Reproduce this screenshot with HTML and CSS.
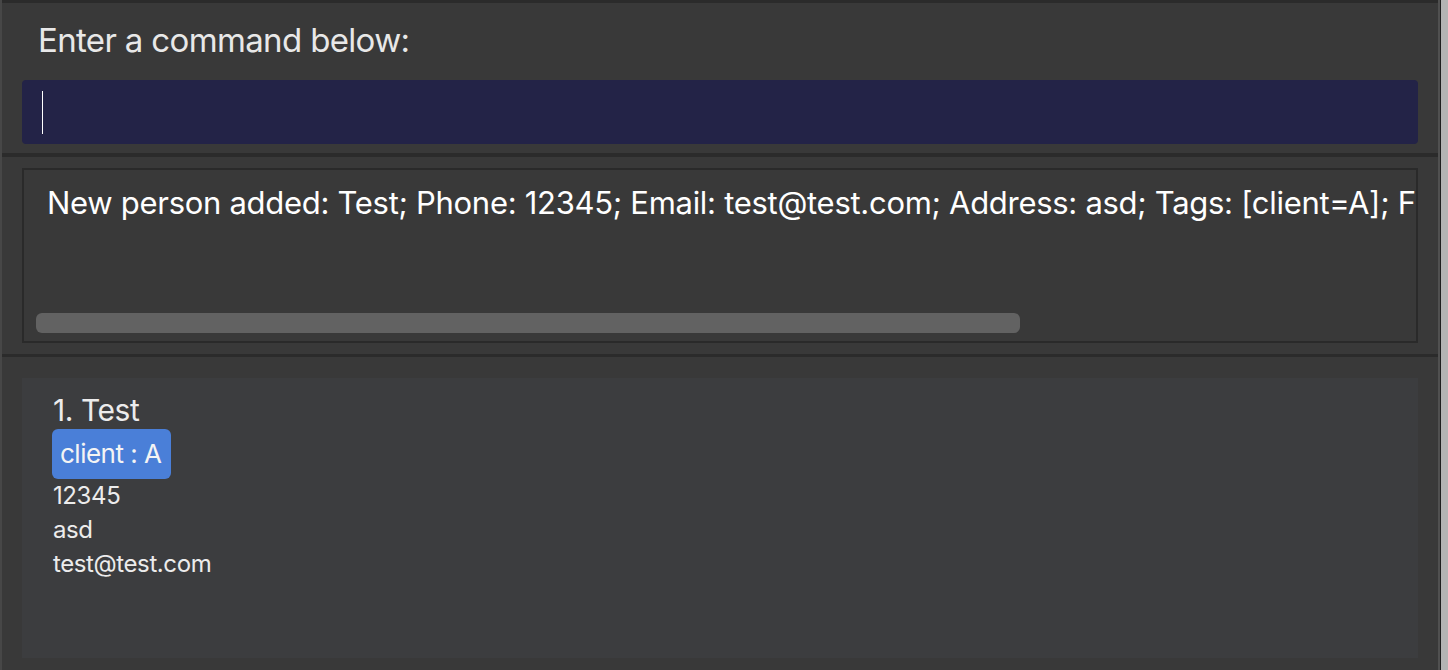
FILE: index.html
```html
<!DOCTYPE html>
<html>
<head>
<meta charset="utf-8">
<link rel="stylesheet" href="styles.css">
</head>
<body>
<div class="window">
  <div class="edge-left"></div>
  <main class="main">
    <section class="command">
      <div class="label">Enter a command below:</div>
      <div class="input"><span class="caret"></span></div>
    </section>
    <section class="result">
      <div class="result-box">
        <div class="result-text">New person added: Test; Phone: 12345; Email: test@test.com; Address: asd; Tags: [client=A]; F</div>
        <div class="hscroll"><div class="thumb"></div></div>
      </div>
    </section>
    <section class="list">
      <div class="card">
        <div class="name">1. Test</div>
        <div class="tags"><span class="tag">client : A</span></div>
        <div class="field">12345</div>
        <div class="field">asd</div>
        <div class="field">test@test.com</div>
      </div>
    </section>
  </main>
  <div class="edge-right"></div>
</div>
</body>
</html>
```
FILE: styles.css
```css
html, body {
  margin: 0;
  padding: 0;
  height: 100%;
  overflow: hidden;
}
body {
  background: #393939;
  font-family: Inter, "Liberation Sans", sans-serif;
}
.window {
  display: flex;
  height: 670px;
}
.edge-left {
  width: 2px;
  background: #474747;
  flex: none;
}
.edge-right {
  width: 10px;
  flex: none;
  box-sizing: border-box;
  border-left: 2px solid #505050;
  background: linear-gradient(to right, #1e1e1e 0 1px, #b4b4b4 1px);
}
.main {
  flex: 1;
  display: flex;
  flex-direction: column;
  border-top: 3px solid #2b2b2b;
}
.command {
  height: 154px;
  flex: none;
  box-sizing: border-box;
  padding: 17px 20px 0 20px;
  border-bottom: 4px solid #2b2b2b;
}
.label {
  color: #e8e8e8;
  font-size: 33px;
  letter-spacing: -0.65px;
  padding-left: 16px;
  line-height: 40px;
}
.input {
  margin-top: 20px;
  height: 64px;
  background: #232347;
  border-radius: 4px;
  display: flex;
  align-items: center;
  padding-left: 20px;
}
.caret {
  width: 1px;
  height: 43px;
  background: #ffffff;
}
.result {
  height: 200px;
  flex: none;
  box-sizing: border-box;
  padding: 11px 20px 0 20px;
  border-bottom: 3px solid #2b2b2b;
}
.result-box {
  height: 175px;
  box-sizing: border-box;
  border: 2px solid #2a2a2a;
  display: flex;
  flex-direction: column;
  overflow: hidden;
}
.result-text {
  color: #ffffff;
  font-size: 31px;
  letter-spacing: -0.29px;
  white-space: nowrap;
  padding: 14px 0 0 23px;
  line-height: 38px;
  flex: 1;
}
.hscroll {
  padding: 0 0 8px 12px;
}
.thumb {
  width: 984px;
  height: 20px;
  border-radius: 6px;
  background: #626262;
}
.list {
  flex: 1;
  padding: 21px 20px 12px 20px;
}
.card {
  height: 280px;
  background: #3c3d3f;
  box-sizing: border-box;
  padding: 14px 0 0 31px;
  color: #ececec;
}
.name {
  font-size: 30px;
  letter-spacing: -0.45px;
  line-height: 36px;
}
.tags {
  display: flex;
  margin-top: 1px;
}
.tag {
  background: #4a7fd8;
  color: #f4f4f4;
  font-size: 26px;
  letter-spacing: -0.5px;
  border-radius: 6px;
  height: 50px;
  line-height: 50px;
  padding: 0 9px 0 8px;
  margin-left: -1px;
}
.field {
  font-size: 24px;
  letter-spacing: -0.4px;
  line-height: 34px;
}
```
